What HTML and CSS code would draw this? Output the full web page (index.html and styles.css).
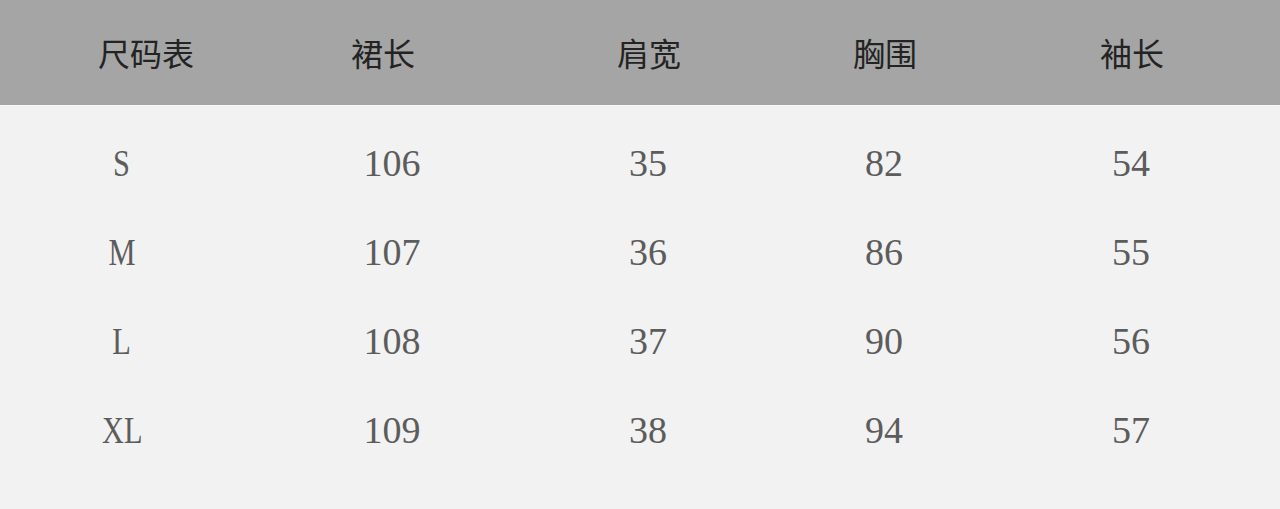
FILE: index.html
```html
<!DOCTYPE html>
<html lang="zh">
<head>
<meta charset="utf-8">
<title>尺码表</title>
<link rel="stylesheet" href="styles.css">
</head>
<body>
<div class="chart">
  <div class="head">
    <div class="hcell">尺码表</div>
    <div class="hcell">裙长</div>
    <div class="hcell">肩宽</div>
    <div class="hcell">胸围</div>
    <div class="hcell">袖长</div>
  </div>
  <div class="body">
    <div class="row"><div class="cell"><span class="size">S</span></div><div class="cell">106</div><div class="cell">35</div><div class="cell">82</div><div class="cell">54</div></div>
    <div class="row"><div class="cell"><span class="size">M</span></div><div class="cell">107</div><div class="cell">36</div><div class="cell">86</div><div class="cell">55</div></div>
    <div class="row"><div class="cell"><span class="size">L</span></div><div class="cell">108</div><div class="cell">37</div><div class="cell">90</div><div class="cell">56</div></div>
    <div class="row"><div class="cell"><span class="size">XL</span></div><div class="cell">109</div><div class="cell">38</div><div class="cell">94</div><div class="cell">57</div></div>
  </div>
</div>
</body>
</html>
```
FILE: styles.css
```css
html, body {
  margin: 0;
  padding: 0;
  background: #f2f2f2;
}
.chart {
  width: 1280px;
  height: 509px;
  overflow: hidden;
  background: #f2f2f2;
}
.head {
  height: 106px;
  background: #a5a5a5;
  border-bottom: 1px solid #f7f7f7;
  box-sizing: border-box;
  padding-left: 40px;
  display: grid;
  grid-template-columns: 212px 262px 270px 202px 292px;
  align-items: center;
}
.hcell {
  text-align: center;
  font-family: "Noto Sans CJK SC", "Noto Sans", sans-serif;
  font-size: 32px;
  font-weight: 400;
  color: #232323;
  line-height: 1;
  padding-bottom: 2px;
}
.body {
  padding-top: 12px;
}
.row {
  height: 89px;
  display: grid;
  grid-template-columns: 244px 296px 216px 256px 238px;
  align-items: center;
}
.cell {
  text-align: center;
  font-family: "Liberation Serif", "Times New Roman", serif;
  font-size: 38px;
  color: #5c5c5c;
  line-height: 1;
}
.size {
  display: inline-block;
  transform: scaleX(0.8);
}
```
